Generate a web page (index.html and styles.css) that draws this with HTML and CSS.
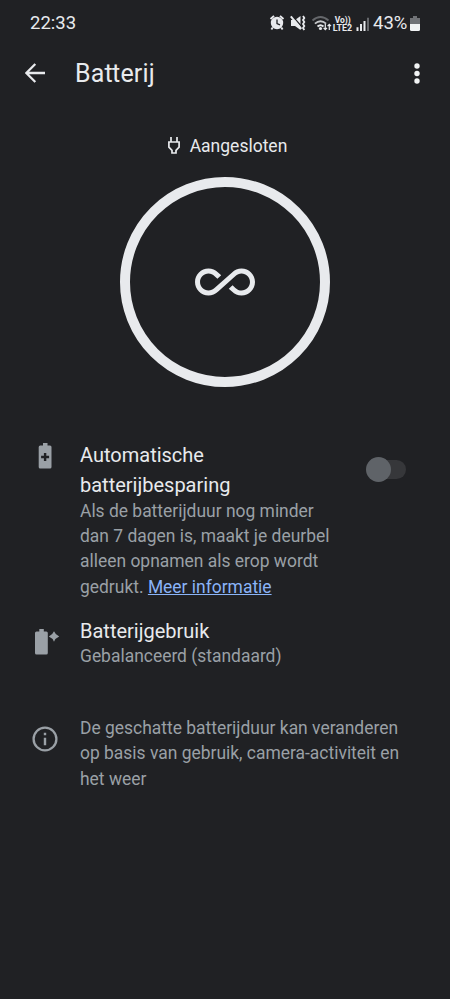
FILE: index.html
```html
<!DOCTYPE html>
<html lang="nl">
<head>
<meta charset="utf-8">
<title>Batterij</title>
<link rel="stylesheet" href="styles.css">
</head>
<body>
<header class="status">
  <span class="clock">22:33</span>
  <svg class="status-icons" viewBox="0 0 102 20" width="102" height="20">
    <g fill="none" stroke="#e8eaed" stroke-width="1.9">
      <path d="M1.500 6 5 2.900M11 2.900l3.500 3.100M3.700 14.500l-1.300 2M12.300 14.500l1.300 2"/>
    </g>
    <circle cx="8" cy="10" r="6.200" fill="#e8eaed"/>
    <path d="M8 6.500v4l3 1.300" fill="none" stroke="#202124" stroke-width="1.300"/>
    <path d="M22 7h4l5.500-4v14L26 13h-4z" fill="#e8eaed"/>
    <path d="m23 2.500 10 11.500" stroke="#202124" stroke-width="1.300"/>
    <path d="m21.800 3.300 10.500 12.500" stroke="#e8eaed" stroke-width="2"/>
    <path d="M34 3l1.300 2-1.300 2 1.300 2-1.300 2 1.300 2-1.300 2 1.300 2" fill="none" stroke="#e8eaed" stroke-width="1.800"/>
    <g fill="none" stroke-width="1.800">
      <path d="M43.500 7.500q8-7 16 0" stroke="#65676b"/>
      <path d="M45.900 10.700q5.600-5 11.200 0" stroke="#c6c8cb"/>
      <path d="M48.500 13.500q3-2.600 6 0" stroke="#e8eaed"/>
    </g>
    <circle cx="51.500" cy="15.500" r="1.600" fill="#e8eaed"/>
    <path d="M56.300 11v5.500M54.600 14.800l1.700 1.900 1.700-1.900M60.300 17v-5.500M58.600 13.200l1.700-1.900 1.700 1.900" fill="none" stroke="#e8eaed" stroke-width="1.200"/>
    <text class="net" x="65.700" y="9.800" textLength="16" lengthAdjust="spacingAndGlyphs">Vo))</text>
    <text class="net" x="63.700" y="18.300" textLength="19.500" lengthAdjust="spacingAndGlyphs">LTE2</text>
    <path d="M87.500 14.300h2V18h-2zM91 11h2v7h-2zM94.500 8h2v10h-2z" fill="#e8eaed"/>
    <path d="M98 4.700h2V18h-2z" fill="#65676b"/>
  </svg>
  <span class="percent">43%</span>
  <svg class="cell" viewBox="0 0 10 15" width="10" height="15">
    <path d="M3 0h4v2h3v6H0V2h3z" fill="#707276"/>
    <path d="M0 8h10v5.500Q10 15 8.500 15h-7Q0 15 0 13.500z" fill="#f1f3f4"/>
  </svg>
</header>
<nav class="bar">
  <svg class="back" viewBox="0 0 20 20" width="20" height="20"><path d="M20 10H1.800M10.300 1 1.300 10l9 9" fill="none" stroke="#e8eaed" stroke-width="2.300"/></svg>
  <h1>Ba<span class="tight">t</span>terij</h1>
  <svg class="more" viewBox="0 0 6 21" width="6" height="21" fill="#f1f3f4"><circle cx="3" cy="3" r="2.700"/><circle cx="3" cy="10.500" r="2.700"/><circle cx="3" cy="18" r="2.700"/></svg>
</nav>
<main>
  <div class="plugged">
    <svg viewBox="0 0 12 17" width="12" height="17" fill="none" stroke="#e8eaed" stroke-width="1.700"><path d="M3 0v5M9 0v5M.900 5h10.200v5.200L8 13.400V16H4v-2.600L.900 10.200z"/></svg>
    <span>Aangesloten</span>
  </div>
  <div class="ring">
    <svg viewBox="0 0 24 24" width="60" height="60" fill="#e8eaed"><path d="M18.600 6.620c-1.440 0-2.800.560-3.770 1.530L7.800 14.390c-.640.640-1.490.990-2.400.990-1.870 0-3.390-1.510-3.390-3.380S3.530 8.620 5.400 8.620c.910 0 1.760.350 2.440 1.030l1.130 1 1.510-1.340L9.220 8.200C8.200 7.180 6.840 6.620 5.400 6.620 2.420 6.620 0 9.040 0 12s2.420 5.380 5.400 5.380c1.440 0 2.800-.560 3.770-1.530l7.030-6.240c.640-.640 1.490-.990 2.400-.990 1.870 0 3.390 1.510 3.390 3.380s-1.520 3.380-3.390 3.380c-.900 0-1.760-.350-2.440-1.030l-1.140-1.010-1.510 1.340 1.270 1.120c1.020 1.010 2.370 1.570 3.820 1.570 2.980 0 5.400-2.410 5.400-5.380s-2.420-5.370-5.400-5.370z"/></svg>
  </div>
  <section class="row saver">
    <svg class="icon" viewBox="0 0 30 26" width="30" height="26"><path d="M13 0h4.500v2.500H20q1.500 0 1.500 1.500v20q0 1.500-1.500 1.500H10.200q-1.500 0-1.500-1.500V4q0-1.500 1.500-1.500H13z" fill="#9aa0a6"/><path d="M15.100 10v8M11.100 14h8" stroke="#202124" stroke-width="2.400"/></svg>
    <div class="copy">
      <h2>Automatische<br>batterijbesparing</h2>
      <p>Als de batterijduur nog minder<br>dan 7 dagen is, maakt je deurbel<br>alleen opnamen als erop wordt<br>gedrukt. <a href="#">Meer informatie</a></p>
    </div>
    <div class="switch"><i></i></div>
  </section>
  <section class="row usage">
    <svg class="icon" viewBox="0 0 30 26" width="30" height="26" fill="#9aa0a6"><path d="M9.300 0h4.500v2.500h2.500q1.500 0 1.500 1.500v20q0 1.500-1.500 1.500H6.500Q5 25.500 5 24V4q0-1.500 1.500-1.500h2.800z"/><path d="M24 2.300q1.500 3.700 5.200 5.200-3.700 1.500-5.200 5.200-1.500-3.700-5.200-5.200 3.700-1.500 5.200-5.200z"/></svg>
    <div class="copy">
      <h2>Batterijgebruik</h2>
      <p>Gebalanceerd (standaard)</p>
    </div>
  </section>
  <section class="row note">
    <svg class="icon" viewBox="0 0 30 26" width="30" height="26"><circle cx="15" cy="13" r="11.400" fill="none" stroke="#9aa0a6" stroke-width="2.300"/><path d="M13.800 11.800h2.400v7.400h-2.400zM13.800 6.800h2.400v2.500h-2.400z" fill="#9aa0a6"/></svg>
    <p class="copy">De geschatte batterijduur kan veranderen<br>op basis van gebruik, camera-activiteit en<br>het weer</p>
  </section>
</main>
</body>
</html>
```
FILE: styles.css
```css
* { box-sizing: border-box; }
body {
  margin: 0;
  min-height: 999px;
  background: #202124;
  color: #e8eaed;
  font-family: Roboto, sans-serif;
}
svg { display: block; flex: none; }
h1, h2, p { margin: 0; font-weight: 400; }

.status {
  display: flex;
  align-items: center;
  height: 45px;
  padding: 0 30px;
}
.clock { font-size: 18.5px; margin-right: auto; }
.status-icons { margin-right: 2px; }
.net { fill: #e8eaed; font-size: 9px; font-weight: 700; }
.percent { width: 37px; font-size: 18.5px; white-space: nowrap; }
.cell { margin-top: 1px; }

.bar {
  display: flex;
  align-items: center;
  height: 56px;
  padding: 0 30px 0 25px;
}
h1 { margin: 2px 0 0 30px; font-size: 25px; line-height: 32px; letter-spacing: .15px; }
.tight { letter-spacing: -.6px; }
.more { margin-left: auto; }

.plugged {
  display: flex;
  justify-content: center;
  align-items: center;
  gap: 10px;
  height: 30px;
  margin-top: 30px;
  padding-left: 5px;
  font-size: 17.5px;
}
.plugged svg { margin-top: -2px; }
.ring {
  display: flex;
  align-items: center;
  justify-content: center;
  width: 210px;
  height: 210px;
  margin: 15.5px auto 0;
  border: 10px solid #e8eaed;
  border-radius: 50%;
}

.row { display: flex; align-items: flex-start; padding: 0 44px 0 30px; }
.icon { margin-right: 20px; }
.saver { margin-top: 53px; }
.saver .icon { margin-top: 3px; }
.saver p { margin-top: -1px; }
.usage { margin-top: 16px; }
.usage .icon { margin-top: 13px; }
.note { margin-top: 46.5px; padding-right: 30px; }
.note .icon { margin-top: 10px; }
h2 { font-size: 20px; line-height: 30px; }
p { color: #9aa0a6; font-size: 17.45px; line-height: 25.4px; white-space: nowrap; }
.usage p { margin-top: -2px; }
a { color: #8ab4f8; }

.switch {
  display: flex;
  align-items: center;
  width: 35px;
  height: 19px;
  margin: 20px 0 0 auto;
  border-radius: 10px;
  background: #36373a;
}
.switch i {
  flex: none;
  width: 25px;
  height: 25px;
  margin-left: -5px;
  border-radius: 50%;
  background: #5f6368;
}
```
